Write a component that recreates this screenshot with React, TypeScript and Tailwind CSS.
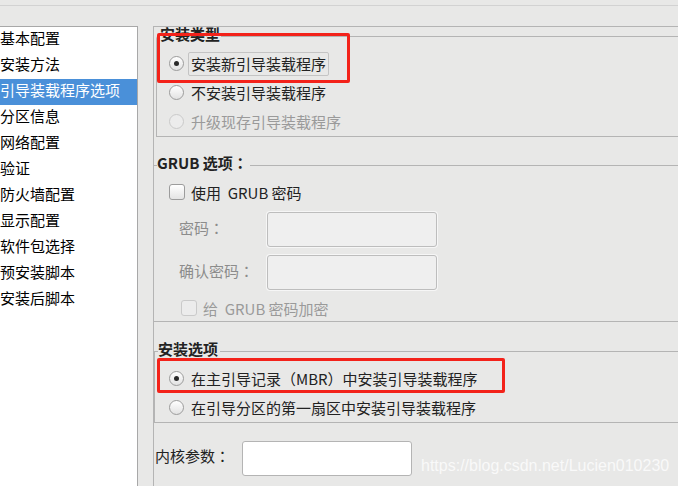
import React from "react";

const navItems = [
  "基本配置",
  "安装方法",
  "引导装载程序选项",
  "分区信息",
  "网络配置",
  "验证",
  "防火墙配置",
  "显示配置",
  "软件包选择",
  "预安装脚本",
  "安装后脚本",
];

// centred full-width colon, as GTK's CJK font draws it
const Colon = () => <span className="font-['Noto_Sans_CJK_TC',sans-serif]">：</span>;

function Radio({ checked = false, disabled = false }: { checked?: boolean; disabled?: boolean }) {
  return (
    <span
      className={
        "flex h-[15px] w-[15px] shrink-0 items-center justify-center rounded-full border " +
        (disabled
          ? "border-[#cacaca] bg-[#ececec]"
          : "border-[#9c9c9c] bg-gradient-to-b from-[#ffffff] to-[#e2e2e2]")
      }
    >
      {checked && <span className="h-[5px] w-[5px] rounded-full bg-[#2a2a2a]" />}
    </span>
  );
}

function Checkbox({ disabled = false }: { disabled?: boolean }) {
  return (
    <span
      className={
        "block h-[16px] w-[16px] shrink-0 rounded-[3px] border " +
        (disabled
          ? "border-[#cacaca] bg-[#ececec]"
          : "border-[#9c9c9c] bg-gradient-to-b from-[#ffffff] to-[#e4e4e4]")
      }
    />
  );
}

function RadioRow({
  label,
  checked,
  disabled,
  focused,
}: {
  label: string;
  checked?: boolean;
  disabled?: boolean;
  focused?: boolean;
}) {
  return (
    <div className="flex h-[29px] items-center">
      <Radio checked={checked} disabled={disabled} />
      <span
        className={
          "ml-[4px] rounded-[2px] border px-[2px] py-[2px] leading-[18px] " +
          (focused ? "border-[#c4c4c4]" : "border-transparent") +
          (disabled ? " text-[#9a9a9a]" : " text-[#222]")
        }
      >
        {label}
      </span>
    </div>
  );
}

export default function App() {
  return (
    <div className="relative h-[486px] w-[678px] overflow-hidden bg-[#e8e8e7] font-['Noto_Sans_CJK_SC',sans-serif] text-[15px] text-[#222]">
      <div className="h-[5px]" />
      <div className="h-[21px] border-t border-[#d2d2d2]" />

      <div className="flex h-[460px]">
        {/* left nav list */}
        <div className="w-[138px] shrink-0 border-r border-t border-[#a8a8a8] bg-white">
          {navItems.map((item) => (
            <div
              key={item}
              className={
                "flex h-[26px] items-center whitespace-nowrap pb-[5px] leading-none " +
                (item === "引导装载程序选项" ? "-ml-[2px] bg-[#4a90d9] pl-[2px] text-white" : "text-black")
              }
            >
              {item}
            </div>
          ))}
        </div>

        <div className="w-[15px] shrink-0" />

        {/* right panel */}
        <div className="flex flex-1 flex-col border-l border-t border-[#b4b4b4]">
          <fieldset className="-mt-[2px] ml-[2px] rounded-tl-[3px] border-b border-l border-t border-[#b4b4b4] pl-[12px]">
            <legend className="-ml-[10px] px-[1px] pb-[4px] text-[15px] font-bold leading-[18px] text-[#222]">
              安装类型
            </legend>
            <div className="pt-[2px]">
              <RadioRow label="安装新引导装载程序" checked focused />
              <RadioRow label="不安装引导装载程序" />
              <RadioRow label="升级现存引导装载程序" disabled />
            </div>
          </fieldset>

          <fieldset className="mt-[17px] border-b border-t border-[#b4b4b4]">
            <legend className="ml-[3px] pb-[4px] pr-[2px] text-[15px] font-bold leading-[18px] text-[#222]">
              GRUB 选项<Colon />
            </legend>
            <div className="pb-[3px] pt-[3px]">
              <div className="flex h-[26px] items-center pl-[15px]">
                <Checkbox />
                <span className="ml-[6px] whitespace-pre leading-none">使用  GRUB 密码</span>
              </div>
              <div className="mt-[7px] flex flex-col gap-[8px] pl-[25px]">
                <div className="flex h-[35px] items-center">
                  <span className="w-[88px] pb-[3px] text-[#8c8c8c]">
                    密码<Colon />
                  </span>
                  <div className="h-[35px] w-[170px] rounded-[3px] border border-[#bdbdbd] bg-[#efefef] shadow-[0_0_0_1px_#f6f6f6]" />
                </div>
                <div className="flex h-[35px] items-center">
                  <span className="w-[88px] pb-[3px] text-[#8c8c8c]">
                    确认密码<Colon />
                  </span>
                  <div className="h-[35px] w-[170px] rounded-[3px] border border-[#bdbdbd] bg-[#efefef] shadow-[0_0_0_1px_#f6f6f6]" />
                </div>
              </div>
              <div className="mt-[8px] flex h-[20px] items-center pl-[27px]">
                <Checkbox disabled />
                <span className="ml-[6px] whitespace-pre leading-none text-[#9a9a9a]">给  GRUB 密码加密</span>
              </div>
            </div>
          </fieldset>

          <fieldset className="mt-[18px] border-b border-l border-t border-[#b4b4b4] pl-[14px]">
            <legend className="-ml-[11px] pb-[4px] pr-[2px] text-[15px] font-bold leading-[18px] text-[#222]">
              安装选项
            </legend>
            <div className="pt-[2px]">
              <RadioRow label="在主引导记录（MBR）中安装引导装载程序" checked />
              <RadioRow label="在引导分区的第一扇区中安装引导装载程序" />
            </div>
          </fieldset>

          <div className="mt-[18px] flex items-center pl-[1px]">
            <span className="w-[87px] pb-[4px]">
              内核参数<Colon />
            </span>
            <div className="h-[35px] w-[170px] rounded-[3px] border border-[#b4b4b4] bg-white" />
          </div>
        </div>
      </div>

      {/* annotation boxes */}
      <div className="pointer-events-none absolute left-[157px] top-[33px] h-[50px] w-[193px] rounded-[2px] border-[3px] border-[#f3221a]" />
      <div className="pointer-events-none absolute left-[157px] top-[358px] h-[35px] w-[348px] rounded-[2px] border-[3px] border-[#f3221a]" />

      {/* watermark */}
      <div className="pointer-events-none absolute left-[421px] top-[456px] font-['Liberation_Sans',sans-serif] text-[16px] leading-[20px] text-white/75">
        https://blog.csdn.net/Lucien010230
      </div>
    </div>
  );
}
